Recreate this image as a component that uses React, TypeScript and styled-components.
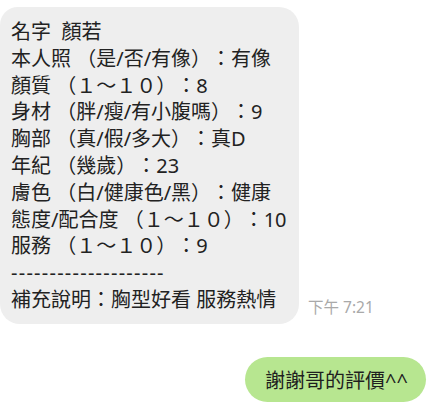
import React from 'react';
import styled, { createGlobalStyle } from 'styled-components';

const GlobalStyle = createGlobalStyle`
  html, body {
    margin: 0;
    padding: 0;
    background: #ffffff;
  }
  body {
    font-family: 'Noto Sans', 'Noto Sans CJK TC', sans-serif;
    color: #222222;
    text-spacing-trim: space-all;
  }
`;

const review = [
  '名字  顏若',
  '本人照 （是/否/有像）：有像',
  '顏質 （１～１０）：8',
  '身材 （胖/瘦/有小腹嗎）：9',
  '胸部 （真/假/多大）：真D',
  '年紀 （幾歲）：23',
  '膚色 （白/健康色/黑）：健康',
  '態度/配合度 （１～１０）：10',
  '服務 （１～１０）：9',
];

const App = () => (
  <>
    <GlobalStyle />
    <Chat>
      <Row>
        <ReceivedBubble>
          {review.map((line) => (
            <Line key={line}>{line}</Line>
          ))}
          <DashLine>--------------------</DashLine>
          <Line>補充說明：胸型好看 服務熱情</Line>
        </ReceivedBubble>
        <Time>下午 7:21</Time>
      </Row>
      <Row $mine>
        <SentBubble>謝謝哥的評價^^</SentBubble>
      </Row>
    </Chat>
  </>
);

const Chat = styled.div`
  width: 428px;
  height: 411px;
  padding-top: 7px;
  box-sizing: border-box;
  display: flex;
  flex-direction: column;
  gap: 33px;
  overflow: hidden;
`;

const Row = styled.div<{ $mine?: boolean }>`
  display: flex;
  align-items: flex-end;
  justify-content: ${(p) => (p.$mine ? 'flex-end' : 'flex-start')};
  padding-right: ${(p) => (p.$mine ? '2px' : '0')};
`;

const ReceivedBubble = styled.div`
  width: 299px;
  box-sizing: border-box;
  padding: 12px 10px 10px 11px;
  background: #eeeeee;
  border-radius: 18px 20px 20px 20px;
  font-size: 20px;
  line-height: 26.8px;
`;

const Line = styled.div`
  white-space: pre;
  text-spacing-trim: space-all;
`;

const DashLine = styled(Line)`
  letter-spacing: 1.25px;
`;

const Time = styled.span`
  margin: 0 0 6px 9px;
  font-size: 15.5px;
  color: #a9a9a9;
  white-space: nowrap;
`;

const SentBubble = styled.div`
  height: 45px;
  box-sizing: border-box;
  padding: 0 18px 0 20px;
  display: flex;
  align-items: center;
  background: #b7e690;
  border-radius: 23px;
  font-size: 20px;
  color: #1f1f1f;
  white-space: nowrap;
`;

export default App;
